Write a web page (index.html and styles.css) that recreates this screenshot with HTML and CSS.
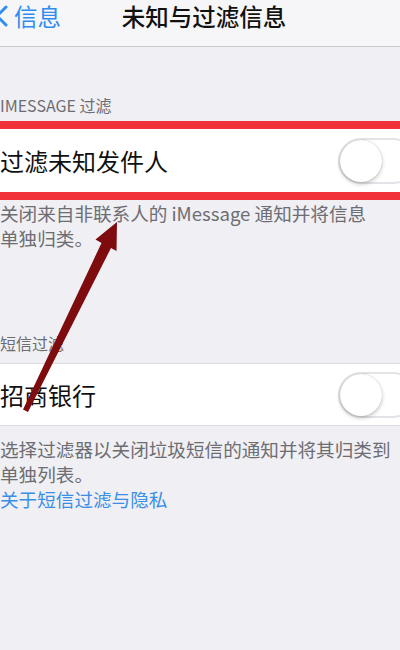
FILE: index.html
```html
<!DOCTYPE html>
<html lang="zh-CN">
<head>
<meta charset="utf-8">
<link rel="stylesheet" href="styles.css">
</head>
<body>
<div class="page">
  <header class="nav">
    <div class="back">
      <svg class="chev" width="8" height="22" viewBox="0 0 8 22"><path d="M6 2 L-3 11 L6 20" fill="none" stroke="#2f8cf0" stroke-width="3" stroke-linecap="round" stroke-linejoin="round"/></svg>
      <span class="back-text">信息</span>
    </div>
    <div class="title">未知与过滤信息</div>
  </header>

  <div class="sec-head first">IMESSAGE 过滤</div>
  <div class="group marked">
    <div class="row">
      <span class="row-label">过滤未知发件人</span>
      <span class="toggle"><span class="knob"></span></span>
    </div>
  </div>
  <div class="sec-foot one">关闭来自非联系人的 iMessage 通知并将信息<br>单独归类。</div>

  <div class="sec-head second">短信过滤</div>
  <div class="group plain">
    <div class="row">
      <span class="row-label">招商银行</span>
      <span class="toggle"><span class="knob"></span></span>
    </div>
  </div>
  <div class="sec-foot two">
    <div class="foot-text">选择过滤器以关闭垃圾短信的通知并将其归类到单独列表。</div>
    <div class="link">关于短信过滤与隐私</div>
  </div>

  <svg class="arrow" width="400" height="650" viewBox="0 0 400 650">
    <polygon points="117,222 116.5,251 111,248 28,412 23,409.5 101.5,243 95.5,239.5" fill="#7e0b0e"/>
  </svg>
</div>
</body>
</html>
```

FILE: styles.css
```css
html, body {
  margin: 0;
  padding: 0;
}
body {
  background: #efeff4;
  font-family: "Noto Sans CJK SC", "Noto Sans", sans-serif;
  width: 400px;
  height: 650px;
  overflow: hidden;
}
.page {
  position: relative;
  width: 400px;
  height: 650px;
}
.nav {
  height: 46px;
  background: #f6f6f8;
  border-bottom: 1px solid #c9c9ce;
  position: relative;
  display: flex;
  align-items: center;
}
.back {
  display: flex;
  align-items: center;
  height: 32px;
  margin-top: -15px;
}
.chev {
  display: block;
  margin-right: 6px;
}
.back-text {
  color: #2f8cf0;
  font-size: 23.5px;
  line-height: 32px;
}
.title {
  position: absolute;
  left: 0;
  right: 0;
  top: 0;
  text-align: center;
  padding-left: 8px;
  font-size: 23.5px;
  line-height: 32px;
  font-weight: 500;
  color: #111;
}
.sec-head {
  font-size: 16px;
  line-height: 20px;
  height: 20px;
  color: #6d6d72;
  padding-left: 0;
}
.sec-head.first {
  padding-top: 48px;
  margin-bottom: 6px;
}
.sec-head.second {
  margin-top: 83px;
  margin-bottom: 10px;
}
.group {
  background: #fff;
}
.group.marked {
  border-top: 8px solid #f2323a;
  border-bottom: 8px solid #f2323a;
}
.group.plain {
  border-top: 1px solid #dcdce0;
  border-bottom: 1px solid #dcdce0;
}
.row {
  height: 63px;
  display: flex;
  align-items: center;
  justify-content: space-between;
  position: relative;
}
.group.plain .row {
  height: 61px;
}
.row-label {
  font-size: 24px;
  color: #111;
  line-height: 30px;
  padding-left: 0;
}
.toggle {
  position: relative;
  display: block;
  width: 74px;
  height: 42px;
  border: 2px solid #e4e4e8;
  border-radius: 24px;
  margin-right: -16px;
  background: #fff;
  flex-shrink: 0;
}
.knob {
  position: absolute;
  left: 0;
  top: 0;
  width: 42px;
  height: 42px;
  border-radius: 50%;
  background: #fff;
  box-shadow: 0 2px 4px rgba(0,0,0,0.22), 0 0 1px rgba(0,0,0,0.25);
}
.sec-foot {
  font-size: 18.6px;
  color: #6d6d72;
  padding-right: 0;
}
.sec-foot.one {
  line-height: 25px;
}
.sec-foot.two {
  line-height: 25px;
  padding-top: 10px;
}
.link {
  color: #3a8ee6;
}
.arrow {
  position: absolute;
  left: 0;
  top: 0;
  pointer-events: none;
}
```
